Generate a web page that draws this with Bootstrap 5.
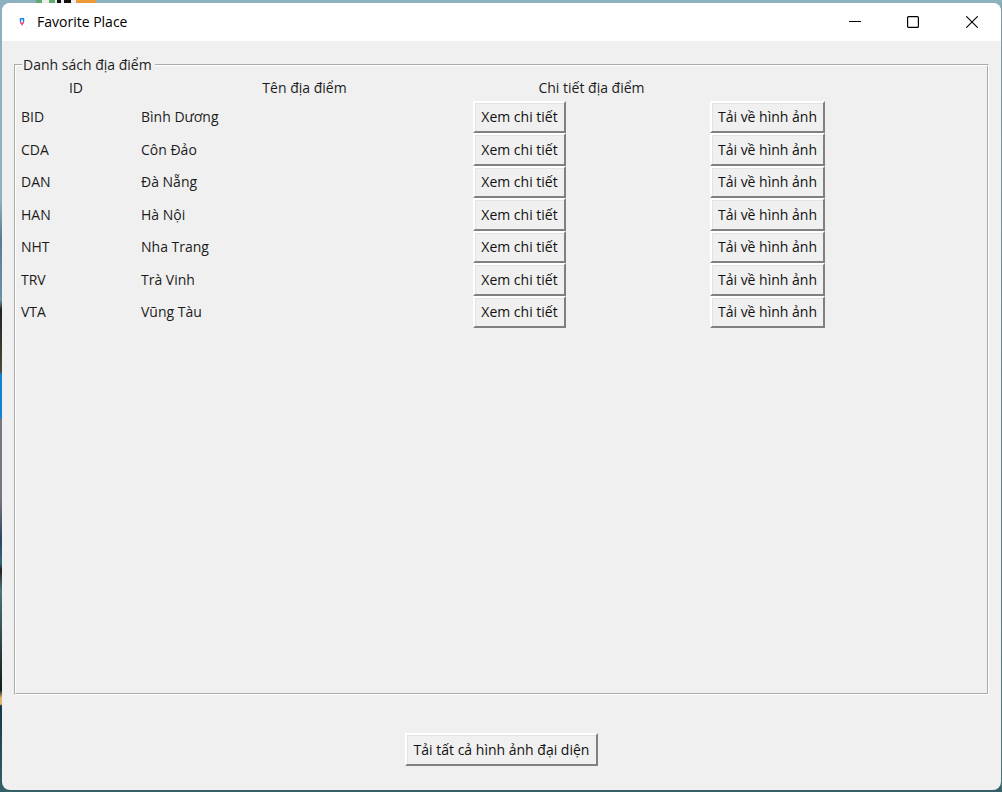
<!DOCTYPE html>
<html lang="vi">
<head>
<meta charset="utf-8">
<meta name="viewport" content="width=device-width, initial-scale=1">
<title>Favorite Place</title>
<link rel="stylesheet" href="https://cdn.jsdelivr.net/npm/bootstrap@5.3.0/dist/css/bootstrap.min.css">
<style>
  body {
    font-family: "Open Sans", "Noto Sans", sans-serif;
    font-size: 14px;
    line-height: 20px;
    color: #1c1c1c;
    padding: 3px 1px 2px 2px;
    background:
      linear-gradient(#f39a35, #e8963c) 76px 0 / 20px 3px no-repeat,
      linear-gradient(90deg, #111 4px, #eee 4px 7px, #111 7px) 57px 0 / 14px 3px no-repeat,
      linear-gradient(#5faa6b, #5faa6b) 36px 0 / 6px 3px no-repeat,
      linear-gradient(#5faa6b, #5faa6b) 49px 0 / 6px 3px no-repeat,
      linear-gradient(#eee, #eee) 42px 0 / 35px 3px no-repeat,
      linear-gradient(#8db1bf, #8db1bf) 0 0 / 100% 3px no-repeat,
      linear-gradient(#356068, #356068) 0 100% / 100% 2px no-repeat,
      linear-gradient(#7f9daa, #47717a) 100% 0 / 1px 100% no-repeat,
      linear-gradient(#8db1bf 0 200px, #5d7990 240px, #6c91a4 300px, #222 310px, #4a4b38 372px, #1682d3 374px 417px, #77757f 420px 500px, #2c4663 540px, #356a78 563px, #222 570px, #4f7478 590px, #101d1b 690px, #e0b46c 698px 704px, #17374a 706px, #356068);
  }
  .app-window { background: #f0f0f0; border-radius: 8px; overflow: hidden; }
  .title-bar { background: #fff; height: 38px; color: #000; padding-left: 15px; }
  .caption-text { padding-left: 10px; }
  .win-btn { width: 58px; height: 38px; border: 0; background: none; padding: 0; }
  .win-btn:last-child { width: 59px; }
  .place-group {
    border: 2px groove #fff;
    margin: 14px 12px 0;
    padding: 0;
  }
  .place-group legend {
    float: none; width: auto; font-size: 14px; line-height: 20px;
    margin: 0 0 0 6px; padding: 0 3px 0 1px;
  }
  .place-table { width: 809px; max-width: 100%; table-layout: fixed; }
  .col-id { width: 120px; }
  .col-place { width: 337px; }
  .col-detail { width: 237px; }
  .col-image { width: 115px; }
  .place-table th { font-weight: 400; text-align: center; vertical-align: middle; height: 26px; padding: 0; }
  .place-table tbody td { height: 32px; padding: 0; }
  .place-table tbody tr:nth-child(even) td { height: 33px; }
  .place-table tbody td:nth-child(-n+2) { padding-left: 5px; }
  .btn-raised {
    font-size: 14px; line-height: 20px; color: #111;
    background: #f0f0f0;
    border: 2px solid; border-color: #fff #808080 #808080 #fff;
    box-shadow: inset 1px 1px #e3e3e3;
    border-radius: 0; padding: 0; height: 32px;
    white-space: nowrap; display: block;
  }
  tr:nth-child(even) .btn-raised { height: 33px; }
  .btn-view { width: 93px; }
  .btn-load { width: 115px; }
  .btn-all { width: 193px; height: 33px; }
  .window-foot { padding: 38px 0 24px; }
</style>
</head>
<body class="vh-100 d-flex flex-column m-0">
<main class="app-window flex-grow-1 d-flex flex-column">
  <header class="title-bar d-flex align-items-center flex-shrink-0">
    <svg class="flex-shrink-0" width="10" height="12" viewBox="0 0 10 12" aria-hidden="true">
      <path d="M0 0h1v1H0zM9 0h1v1H9zM0 11h1v1H0zM9 11h1v1H9z" fill="#ddd"/>
      <path d="M3.5 6V2.7h3V6" fill="none" stroke="#1685f5" stroke-width="1.4"/>
      <path d="M3.2 5.8 4 7.2h2l.8-1.4" fill="none" stroke="#e94b86" stroke-width="1.2"/>
      <path d="M3.5 7h3L5 10z" fill="#f52f68"/>
    </svg>
    <span class="caption-text me-auto">Favorite Place</span>
    <button class="win-btn" type="button" aria-label="Thu nhỏ">
      <svg class="d-block mx-auto" width="12" height="12" viewBox="0 0 12 12"><path d="M0 5.5h12" stroke="#000"/></svg>
    </button>
    <button class="win-btn" type="button" aria-label="Phóng to">
      <svg class="d-block mx-auto" width="12" height="12" viewBox="0 0 12 12"><rect x=".6" y=".6" width="10.8" height="10.8" rx="1" fill="none" stroke="#000" stroke-width="1.2"/></svg>
    </button>
    <button class="win-btn" type="button" aria-label="Đóng">
      <svg class="d-block mx-auto" width="12" height="12" viewBox="0 0 12 12"><path d="m.3.3 11.4 11.4M11.7.3.3 11.7" stroke="#000" stroke-width="1.1"/></svg>
    </button>
  </header>

  <fieldset class="place-group flex-grow-1">
    <legend>Danh sách địa điểm</legend>
    <table class="place-table">
      <colgroup><col class="col-id"><col class="col-place"><col class="col-detail"><col class="col-image"></colgroup>
      <thead>
        <tr><th scope="col">ID</th><th scope="col">Tên địa điểm</th><th scope="col">Chi tiết địa điểm</th><td></td></tr>
      </thead>
      <tbody>
        <tr><td>BID</td><td>Bình Dương</td><td><button type="button" class="btn btn-raised btn-view">Xem chi tiết</button></td><td><button type="button" class="btn btn-raised btn-load">Tải về hình ảnh</button></td></tr>
        <tr><td>CDA</td><td>Côn Đảo</td><td><button type="button" class="btn btn-raised btn-view">Xem chi tiết</button></td><td><button type="button" class="btn btn-raised btn-load">Tải về hình ảnh</button></td></tr>
        <tr><td>DAN</td><td>Đà Nẵng</td><td><button type="button" class="btn btn-raised btn-view">Xem chi tiết</button></td><td><button type="button" class="btn btn-raised btn-load">Tải về hình ảnh</button></td></tr>
        <tr><td>HAN</td><td>Hà Nội</td><td><button type="button" class="btn btn-raised btn-view">Xem chi tiết</button></td><td><button type="button" class="btn btn-raised btn-load">Tải về hình ảnh</button></td></tr>
        <tr><td>NHT</td><td>Nha Trang</td><td><button type="button" class="btn btn-raised btn-view">Xem chi tiết</button></td><td><button type="button" class="btn btn-raised btn-load">Tải về hình ảnh</button></td></tr>
        <tr><td>TRV</td><td>Trà Vinh</td><td><button type="button" class="btn btn-raised btn-view">Xem chi tiết</button></td><td><button type="button" class="btn btn-raised btn-load">Tải về hình ảnh</button></td></tr>
        <tr><td>VTA</td><td>Vũng Tàu</td><td><button type="button" class="btn btn-raised btn-view">Xem chi tiết</button></td><td><button type="button" class="btn btn-raised btn-load">Tải về hình ảnh</button></td></tr>
      </tbody>
    </table>
  </fieldset>

  <footer class="window-foot d-flex justify-content-center">
    <button type="button" class="btn btn-raised btn-all">Tải tất cả hình ảnh đại diện</button>
  </footer>
</main>
<script src="https://cdn.jsdelivr.net/npm/bootstrap@5.3.0/dist/js/bootstrap.bundle.min.js"></script>
</body>
</html>
